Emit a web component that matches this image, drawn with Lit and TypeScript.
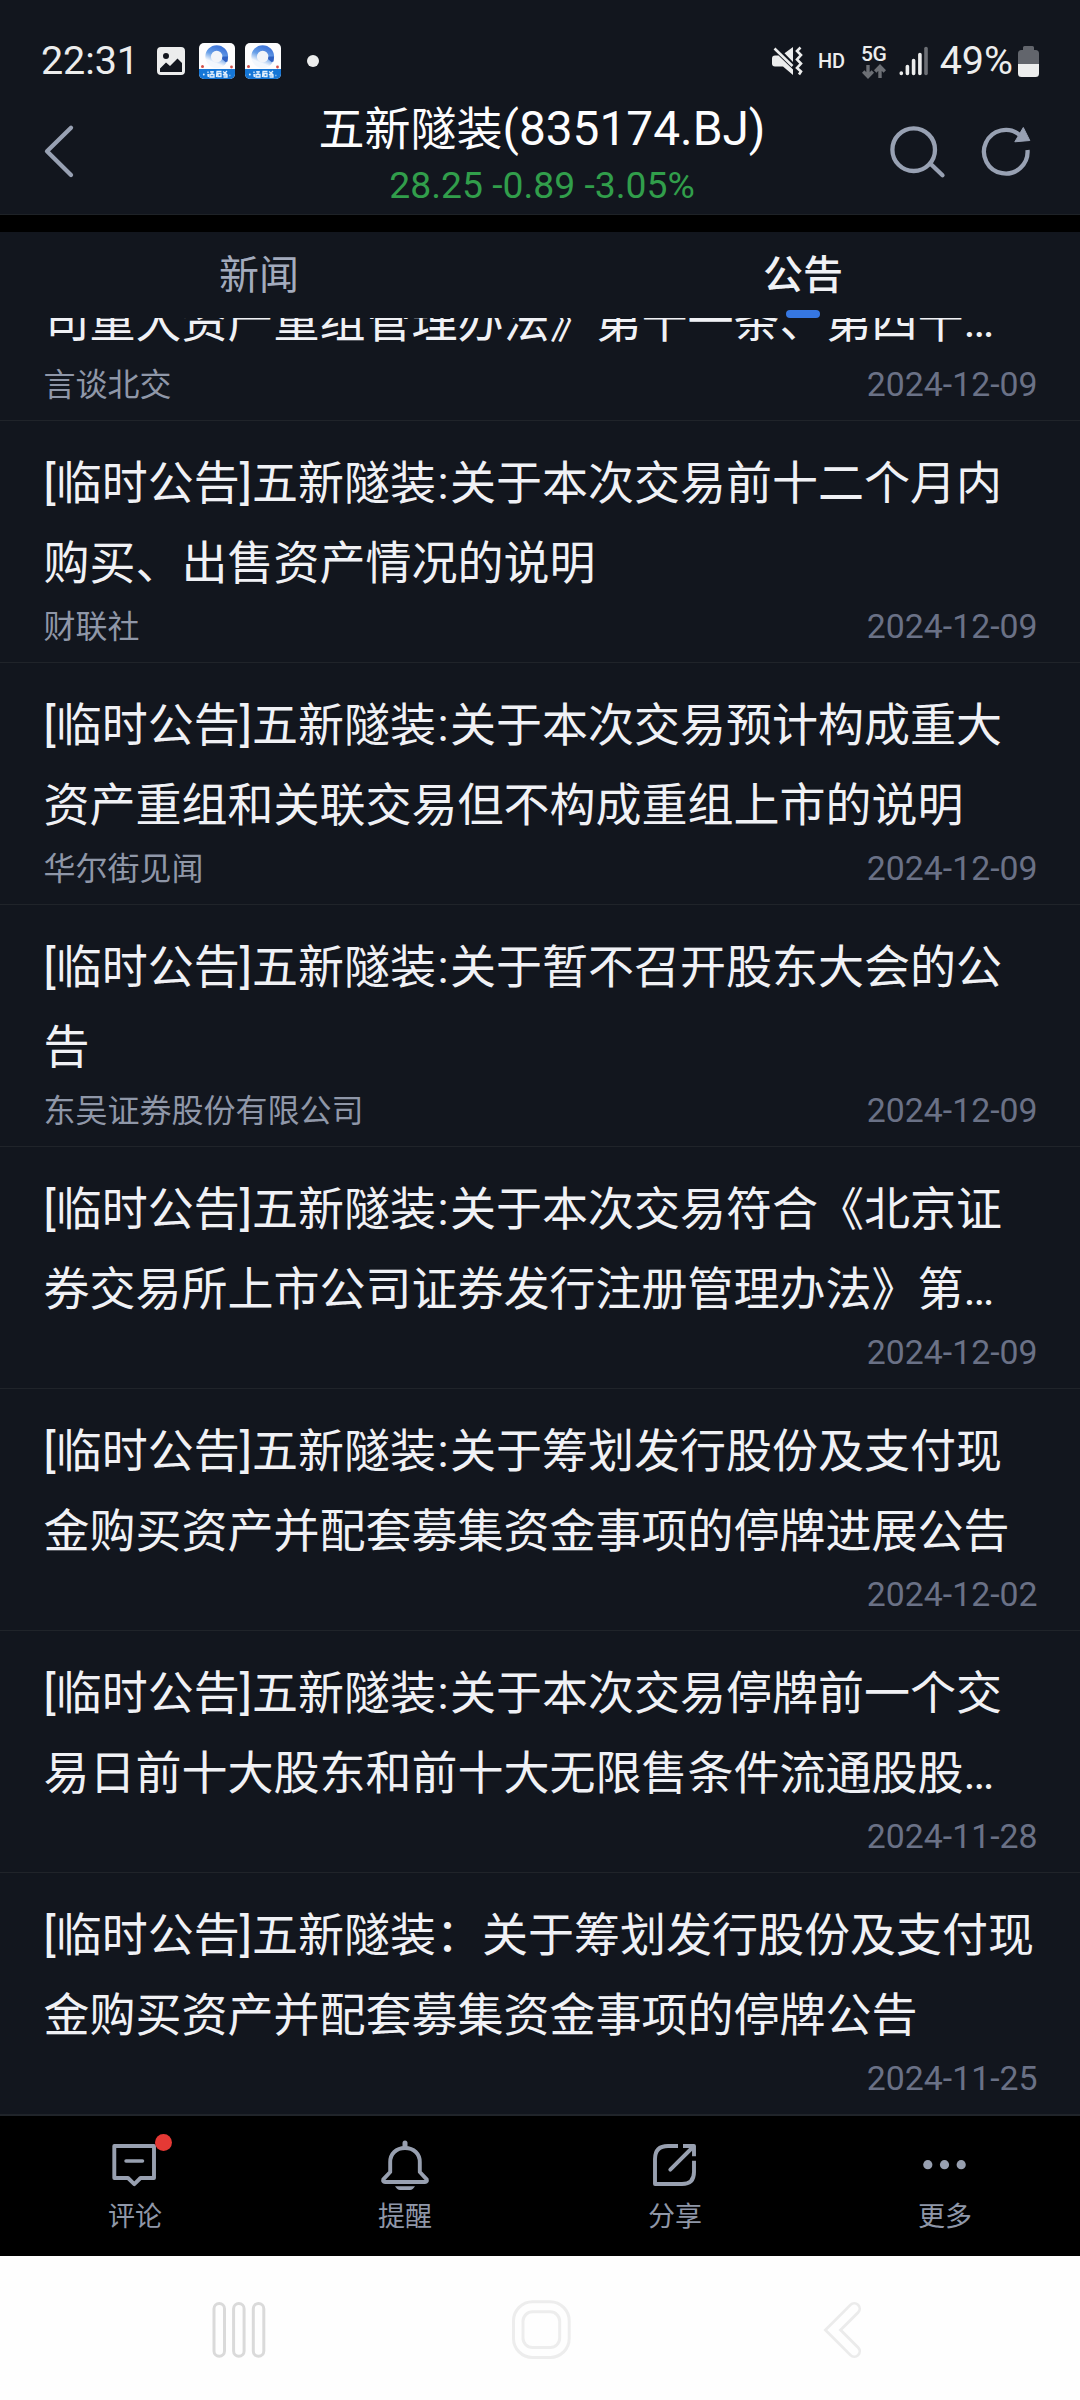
import { LitElement, html, svg, css, nothing } from "lit";
import { customElement, property } from "lit/decorators.js";

interface Notice {
  lines: string[];
  source?: string;
  date: string;
}

const NOTICES: Notice[] = [
  {
    lines: ["司重大资产重组管理办法》第十一条、第四十…"],
    source: "言谈北交",
    date: "2024-12-09",
  },
  {
    lines: ["[临时公告]五新隧装:关于本次交易前十二个月内", "购买、出售资产情况的说明"],
    source: "财联社",
    date: "2024-12-09",
  },
  {
    lines: ["[临时公告]五新隧装:关于本次交易预计构成重大", "资产重组和关联交易但不构成重组上市的说明"],
    source: "华尔街见闻",
    date: "2024-12-09",
  },
  {
    lines: ["[临时公告]五新隧装:关于暂不召开股东大会的公", "告"],
    source: "东吴证券股份有限公司",
    date: "2024-12-09",
  },
  {
    lines: ["[临时公告]五新隧装:关于本次交易符合《北京证", "券交易所上市公司证券发行注册管理办法》第…"],
    date: "2024-12-09",
  },
  {
    lines: ["[临时公告]五新隧装:关于筹划发行股份及支付现", "金购买资产并配套募集资金事项的停牌进展公告"],
    date: "2024-12-02",
  },
  {
    lines: ["[临时公告]五新隧装:关于本次交易停牌前一个交", "易日前十大股东和前十大无限售条件流通股股…"],
    date: "2024-11-28",
  },
  {
    lines: ["[临时公告]五新隧装：关于筹划发行股份及支付现", "金购买资产并配套募集资金事项的停牌公告"],
    date: "2024-11-25",
  },
];

@customElement("status-bar")
class StatusBar extends LitElement {
  static styles = css`
    :host {
      display: flex;
      justify-content: space-between;
      height: 84px;
      padding: 0 41px 0 41px;
      color: #eceded;
      font-size: 40px;
    }
    .group {
      display: flex;
      height: 84px;
      padding-top: 38px;
      box-sizing: border-box;
      align-items: center;
    }
    svg {
      display: block;
      flex: none;
    }
    .time {
      width: 116px;
      font-size: 39.500px;
      letter-spacing: -0.100px;
      line-height: 46px;
    }
    .pct {
      font-size: 39.500px;
      line-height: 46px;
    }
    .app { margin-left: 10px; }
    .app.first { margin-left: 14px; }
    .dot {
      width: 12px;
      height: 12px;
      margin-left: 26px;
      border-radius: 50%;
      background: #eceded;
    }
    .hd {
      margin-left: 15px;
      font-size: 20px;
      font-weight: 500;
      line-height: 24px;
      letter-spacing: -0.3px;
    }
    .net {
      display: flex;
      flex-direction: column;
      align-items: center;
      margin: 0 12px 0 16px;
      width: 26px;
    }
    .gen {
      font-size: 21px;
      font-weight: 500;
      line-height: 20px;
      letter-spacing: -0.500px;
    }
    .signal { margin-right: 11px; }
    .battery { margin-left: 5px; }
  `;

  private appIcon(cls: string) {
    return html`<svg class=${cls} width="36" height="36" viewBox="0 0 36 36">
      <defs>
        <linearGradient id="ring" x1="0.700" y1="0" x2="0.300" y2="1">
          <stop offset="0" stop-color="#4379da"></stop>
          <stop offset="0.450" stop-color="#68a0e8"></stop>
          <stop offset="0.850" stop-color="#f2f7fd"></stop>
        </linearGradient>
      </defs>
      <rect width="36" height="36" rx="5" fill="#fdfdfe"></rect>
      <circle cx="17.7" cy="13.6" r="8.6" fill="#f1f4f9" stroke="url(#ring)" stroke-width="5.6"></circle>
      <path d="M23.500 13.500h5.500l-.5 5-2 .5-3.500-3z" fill="#2f60c2"></path>
      <circle cx="3.500" cy="23.400" r="1.500" fill="#d2504a"></circle>
      <circle cx="32.500" cy="24" r="1.400" fill="#d2504a"></circle>
      <path d="M0 26h36v5a5 5 0 0 1-5 5H5a5 5 0 0 1-5-5z" fill="#1576d6"></path>
      <path d="M9 28.500v1.500M8.500 32.500l.8-1.500v3M11 28.800h4M13 28v3M11 31.500h4v2.500h-4zM17.500 34l.5-5.500h4.500M19 30.500h3v3h-3zM24 28.500l4 3M28 28l-4 4M24.500 32h3.500v2h-3.500M30.500 32.500h.8" stroke="#e4f1fd" stroke-width="1.300" fill="none"></path>
      <circle cx="4.800" cy="31.500" r=".9" fill="#e4f1fd"></circle>
    </svg>`;
  }

  render() {
    return html`
      <div class="group">
        <span class="time">22:31</span>
        <svg width="28" height="28" viewBox="0 0 28 28">
          <path fill="#eceded" fill-rule="evenodd" d="M4 0h20a4 4 0 0 1 4 4v20a4 4 0 0 1-4 4H4a4 4 0 0 1-4-4V4a4 4 0 0 1 4-4zM9 6a3 3 0 1 0 0 6 3 3 0 0 0 0-6zM3 21.500v3.500h22V16L20.500 11.500 13 19 9 15.500z"></path>
        </svg>
        ${this.appIcon("app first")} ${this.appIcon("app")}
        <span class="dot"></span>
      </div>
      <div class="group">
        <svg width="31" height="30" viewBox="0 0 31 30">
          <path fill="#eceded" d="M0 12.500a3 3 0 0 1 3-3H6.500L21 23.500v5.500L11 20.500H3a3 3 0 0 1-3-3zM12.500 7.200L21 1v15z"></path>
          <path d="M2.500 2.500L20.500 20" stroke="#eceded" stroke-width="2.600" fill="none"></path>
          <path d="M28.500 1.500l-3.500 3.500 4 4-4 4.500 4 4-4 4.500 4 3.500-2 3" stroke="#eceded" stroke-width="2.600" fill="none"></path>
        </svg>
        <span class="hd">HD</span>
        <div class="net">
          <span class="gen">5G</span>
          <svg width="24" height="15" viewBox="0 0 24 15" fill="none" stroke="#6c6f75" stroke-width="3.400">
            <path d="M6 1v11M1.200 7.500L6 12.500l4.800-5M18 14V3M13.200 7.500L18 2.500l4.800 5"></path>
          </svg>
        </div>
        <svg class="signal" width="30" height="30" viewBox="0 0 30 30" stroke-width="3.600" stroke-linecap="round" stroke="#eceded">
          <path d="M2.300 27v.4M8.400 20.500V27.400M14.600 14.500V27.400M20.900 8.500V27.400"></path>
          <path d="M27 2.500V27.400" stroke="#6c6f75"></path>
        </svg>
        <span class="pct">49%</span>
        <svg class="battery" width="21" height="31" viewBox="0 0 21 31">
          <path fill="#62656c" d="M6.500 0h8a1.500 1.500 0 0 1 1.500 1.500V4h1.500A3.500 3.500 0 0 1 21 7.500V18H0V7.500A3.500 3.500 0 0 1 3.500 4H5V1.500A1.500 1.500 0 0 1 6.500 0z"></path>
          <path fill="#eceded" d="M0 18h21v9.500a3.500 3.500 0 0 1-3.500 3.500h-14A3.500 3.500 0 0 1 0 27.500z"></path>
        </svg>
      </div>
    `;
  }
}

@customElement("title-bar")
class TitleBar extends LitElement {
  static styles = css`
    :host {
      display: grid;
      grid-template-columns: 200px 1fr 200px;
      height: 131px;
      box-sizing: border-box;
      border-bottom: 1px solid #1e2227;
    }
    svg {
      display: block;
      fill: none;
      stroke: #98a1b3;
      stroke-width: 4.300;
    }
    .back { margin: 40px 0 0 42px; }
    .center {
      text-align: center;
      padding-top: 17px;
      margin-left: 4px;
    }
    .name {
      font-size: 46px;
      line-height: 56px;
      height: 56px;
      color: #fdfdfe;
      white-space: nowrap;
    }
    .code { font-size: 47.800px; }
    .quote {
      font-size: 37.300px;
      line-height: 56px;
      color: #319e4b;
      white-space: nowrap;
    }
    .actions {
      display: flex;
      gap: 34px;
      padding: 40px 0 0 8px;
    }
    .solid {
      fill: #98a1b3;
      stroke-width: 1;
    }
  `;

  render() {
    return html`
      <svg class="back" width="34" height="56" viewBox="42 124 34 56" stroke-linecap="round" stroke-linejoin="round">
        <path d="M71 127.700L47 151.300 71 175"></path>
      </svg>
      <div class="center">
        <div class="name">五新隧装<span class="code">(835174.BJ)</span></div>
        <div class="quote">28.25 -0.89 -3.05%</div>
      </div>
      <div class="actions">
        <svg width="58" height="56" viewBox="888 124 58 56" stroke-linecap="round">
          <circle cx="913.700" cy="149.700" r="21.300"></circle>
          <path d="M931 164.300L942.500 175.300"></path>
        </svg>
        <svg width="54" height="56" viewBox="980 124 54 56">
          <path d="M1027.500 150a21.800 21.800 0 1 1-8-15.200"></path>
          <path class="solid" d="M1023.300 127.500l6.500 13-15 1.300z"></path>
        </svg>
      </div>
    `;
  }
}

@customElement("section-tabs")
class SectionTabs extends LitElement {
  static styles = css`
    :host {
      display: flex;
      justify-content: space-between;
      height: 86px;
      padding: 0 237px 0 219px;
      font-size: 40px;
    }
    .tab {
      display: flex;
      flex-direction: column;
      justify-content: space-between;
      align-items: center;
      color: #a3abbd;
      height: 86px;
    }
    .tab.active {
      color: #f0f1f5;
      font-weight: 500;
    }
    .label {
      height: 58px;
      padding-top: 20px;
      line-height: 48px;
    }
    .mark {
      width: 34px;
      height: 8px;
      border-radius: 4px;
      background: #3677e2;
    }
  `;

  render() {
    return html`
      <div class="tab"><span class="label">新闻</span></div>
      <div class="tab active"><span class="label">公告</span><span class="mark"></span></div>
    `;
  }
}

@customElement("notice-row")
class NoticeRow extends LitElement {
  @property({ attribute: false }) notice!: Notice;

  static styles = css`
    :host {
      display: flex;
      flex-direction: column;
      justify-content: flex-end;
      flex: none;
      height: 242px;
      box-sizing: border-box;
      padding: 0 42.500px 15px 43.500px;
      border-bottom: 1px solid #20242a;
    }
    .line {
      height: 80px;
      line-height: 80px;
      font-size: 46px;
      color: #f0f1f5;
      white-space: nowrap;
    }
    .colon { padding: 0 1.500px; }
    .meta {
      display: flex;
      justify-content: space-between;
      height: 42px;
      padding-top: 2px;
      line-height: 44px;
    }
    .source {
      font-size: 32px;
      color: #8f97a8;
    }
    .date {
      font-size: 33.800px;
      color: #6a7186;
    }
  `;

  private line(text: string) {
    const [head, tail] = text.split(":");
    return html`<div class="line">${head}${tail ? html`<span class="colon">:</span>${tail}` : nothing}</div>`;
  }

  render() {
    const n = this.notice;
    return html`
      ${n.lines.map((l) => this.line(l))}
      <div class="meta">
        <span class="source">${n.source ?? nothing}</span>
        <span class="date">${n.date}</span>
      </div>
    `;
  }
}

const ACTIONS = [
  {
    label: "评论",
    badge: true,
    icon: svg`<path d="M114.300 2146H154V2178H140.500L134.300 2184.200 128 2178H114.300Z" stroke-linejoin="round"/>
      <path d="M126 2161H142.500" stroke-linecap="round" stroke-width="3.500"/>`,
    origin: 105,
  },
  {
    label: "提醒",
    badge: false,
    icon: svg`<path d="M405 2143V2147" stroke-width="5" stroke-linecap="round"/>
      <path d="M405 2148C396 2148 390.200 2154 390.200 2162V2172L383.300 2179.300Q382.500 2182 385 2182H425Q427.500 2182 426.700 2179.300L419.800 2172V2162C419.800 2154 414 2148 405 2148Z" stroke-linejoin="round"/>
      <path d="M395 2186.200H415C413.500 2188.500 412 2190 410 2190H400C398 2190 396.500 2188.500 395 2186.200Z" fill="#98a0b0" stroke="none"/>`,
    origin: 375,
  },
  {
    label: "分享",
    badge: false,
    icon: svg`<path d="M678 2146H668Q655 2146 655 2159V2184H682Q694 2184 694 2172V2160.700" stroke-linejoin="round"/>
      <path d="M683 2146H694V2156.300" stroke-linejoin="round"/>
      <path d="M670.300 2169.700L693 2147" stroke-linecap="round"/>`,
    origin: 645,
  },
  {
    label: "更多",
    badge: false,
    icon: svg`<g fill="#98a0b0" stroke="none"><circle cx="927.800" cy="2164.700" r="4.600"/><circle cx="944.500" cy="2164.700" r="4.600"/><circle cx="961.200" cy="2164.700" r="4.600"/></g>`,
    origin: 915,
  },
];

@customElement("action-bar")
class ActionBar extends LitElement {
  static styles = css`
    :host {
      display: grid;
      grid-template-columns: repeat(4, 1fr);
      height: 141px;
      box-sizing: border-box;
      border-top: 1px solid #20242a;
      background: #000;
    }
    .item {
      display: flex;
      flex-direction: column;
      align-items: center;
      gap: 3px;
      padding-top: 20px;
      color: #8f97a8;
      font-size: 27px;
      line-height: 37px;
    }
    .icon {
      position: relative;
      width: 60px;
      height: 60px;
    }
    svg {
      display: block;
      fill: none;
      stroke: #98a0b0;
      stroke-width: 3.900;
    }
    .badge {
      position: absolute;
      left: 50px;
      top: -2px;
      width: 17px;
      height: 17px;
      border-radius: 50%;
      background: #e53935;
    }
  `;

  render() {
    return html`${ACTIONS.map(
      (a) => html`<div class="item">
        <div class="icon">
          <svg width="60" height="60" viewBox="${a.origin} 2136 60 60">${a.icon}</svg>
          ${a.badge ? html`<span class="badge"></span>` : nothing}
        </div>
        <span>${a.label}</span>
      </div>`
    )}`;
  }
}

@customElement("system-nav")
class SystemNav extends LitElement {
  static styles = css`
    :host {
      display: flex;
      height: 144px;
      box-sizing: border-box;
      padding: 42px 0 0 208px;
      background: #fefefe;
    }
    svg {
      display: block;
      flex: none;
      fill: none;
      stroke-width: 3;
    }
    .home { margin: 0 248px 0 238px; }
  `;

  render() {
    return html`
      <svg width="62" height="64" viewBox="208 2298 62 64" stroke="#dadada">
        <rect x="214" y="2303.500" width="10.500" height="52.700" rx="5.250"></rect>
        <rect x="233.600" y="2303.500" width="10.500" height="52.700" rx="5.250"></rect>
        <rect x="253.300" y="2303.500" width="10.500" height="52.700" rx="5.250"></rect>
      </svg>
      <svg class="home" width="64" height="64" viewBox="508 2298 64 64" stroke="#ededed">
        <rect x="513.500" y="2301.800" width="55.700" height="55.700" rx="19"></rect>
        <rect x="523" y="2311.800" width="36.700" height="35.700" rx="9.500"></rect>
      </svg>
      <svg width="44" height="64" viewBox="820 2298 44 64" stroke-linecap="round">
        <path d="M854.300 2308.700L833 2330 854.300 2351.300" stroke="#ebebeb" stroke-width="13.500"></path>
        <path d="M854.300 2308.700L833 2330 854.300 2351.300" stroke="#fefefe" stroke-width="8"></path>
      </svg>
    `;
  }
}

@customElement("app-root")
class AppRoot extends LitElement {
  static styles = css`
    :host {
      display: flex;
      flex-direction: column;
      width: 1080px;
      height: 2400px;
      overflow: hidden;
      background: #12161e;
      font-family: Roboto, "Noto Sans CJK SC", sans-serif;
    }
    .band {
      flex: none;
      height: 17px;
      background: #000;
    }
    status-bar,
    title-bar,
    section-tabs,
    action-bar,
    system-nav {
      flex: none;
    }
    .list {
      display: flex;
      flex-direction: column;
      justify-content: flex-end;
      height: 1797px;
      flex: none;
      overflow: hidden;
    }
  `;

  render() {
    return html`
      <status-bar></status-bar>
      <title-bar></title-bar>
      <div class="band"></div>
      <section-tabs></section-tabs>
      <div class="list">
        ${NOTICES.map((n) => html`<notice-row .notice=${n}></notice-row>`)}
      </div>
      <action-bar></action-bar>
      <system-nav></system-nav>
    `;
  }
}
